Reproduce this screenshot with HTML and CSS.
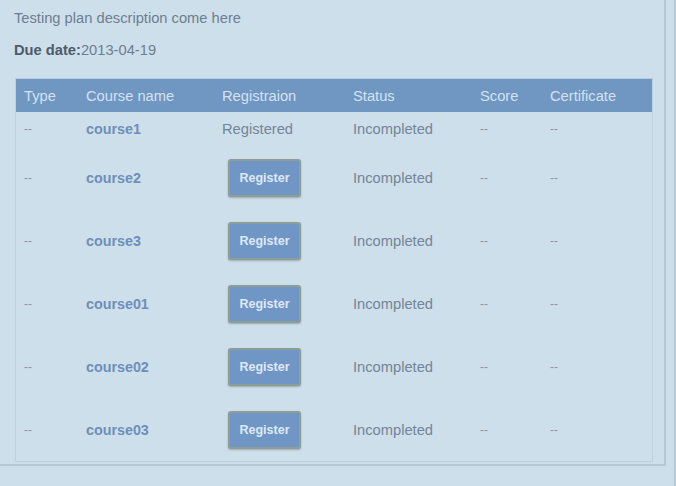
FILE: index.html
```html
<!DOCTYPE html>
<html>
<head>
<meta charset="utf-8">
<link rel="stylesheet" href="styles.css">
</head>
<body>
<div class="page">
  <div class="panel">
    <p class="desc">Testing plan description come here</p>
    <p class="due"><b>Due date:</b>2013-04-19</p>
    <table class="courses">
      <thead>
        <tr>
          <th class="c-type">Type</th>
          <th class="c-name">Course name</th>
          <th class="c-reg">Registraion</th>
          <th class="c-status">Status</th>
          <th class="c-score">Score</th>
          <th class="c-cert">Certificate</th>
        </tr>
      </thead>
      <tbody>
        <tr class="short">
          <td class="dash">--</td>
          <td><a class="course">course1</a></td>
          <td>Registered</td>
          <td>Incompleted</td>
          <td class="dash">--</td>
          <td class="dash">--</td>
        </tr>
        <tr class="tall">
          <td class="dash">--</td>
          <td><a class="course">course2</a></td>
          <td><button class="btn">Register</button></td>
          <td>Incompleted</td>
          <td class="dash">--</td>
          <td class="dash">--</td>
        </tr>
        <tr class="tall">
          <td class="dash">--</td>
          <td><a class="course">course3</a></td>
          <td><button class="btn">Register</button></td>
          <td>Incompleted</td>
          <td class="dash">--</td>
          <td class="dash">--</td>
        </tr>
        <tr class="tall">
          <td class="dash">--</td>
          <td><a class="course">course01</a></td>
          <td><button class="btn">Register</button></td>
          <td>Incompleted</td>
          <td class="dash">--</td>
          <td class="dash">--</td>
        </tr>
        <tr class="tall">
          <td class="dash">--</td>
          <td><a class="course">course02</a></td>
          <td><button class="btn">Register</button></td>
          <td>Incompleted</td>
          <td class="dash">--</td>
          <td class="dash">--</td>
        </tr>
        <tr class="tall">
          <td class="dash">--</td>
          <td><a class="course">course03</a></td>
          <td><button class="btn">Register</button></td>
          <td>Incompleted</td>
          <td class="dash">--</td>
          <td class="dash">--</td>
        </tr>
      </tbody>
    </table>
  </div>
  <div class="strip"></div>
</div>
</body>
</html>
```
FILE: styles.css
```css
html, body {
  margin: 0;
  padding: 0;
  background: #cddfeb;
  height: 100%;
}
body {
  font-family: "Liberation Sans", Arial, sans-serif;
  font-size: 14.7px;
  color: #738394;
}
.page {
  display: flex;
  align-items: flex-start;
  width: 676px;
  height: 486px;
}
.panel {
  flex: none;
  width: 639px;
  padding: 8px 11px 2px 14px;
  border-right: 2px solid #b4c7d5;
  border-bottom: 2px solid #b4c7d5;
  background: #cddfeb;
}
.strip {
  flex: 1;
  align-self: stretch;
  border-right: 2px solid #b9cad7;
}
.desc {
  margin: 0;
  line-height: 20px;
  color: #6e7e8f;
}
.due {
  margin: 12px 0 0;
  line-height: 20px;
  color: #6e7e8f;
}
.due b {
  color: #4d5b69;
}
.courses {
  margin: 18px 0 0 1px;
  width: 638px;
  border-collapse: collapse;
  border: 1px solid #bed1df;
  table-layout: fixed;
}
.courses th {
  background: #7096c2;
  color: #d3e2f1;
  font-weight: normal;
  text-align: left;
  height: 33px;
  padding: 0 0 0 8px;
  border-top: 1px solid #b7cbe0;
}
.c-type { width: 54px; }
.c-name { width: 128px; }
.c-reg { width: 123px; }
.c-status { width: 119px; }
.c-score { width: 62px; }
.c-cert { width: auto; }
.courses td {
  padding: 0 0 0 8px;
  color: #748597;
  vertical-align: middle;
}
.courses tr.short td { height: 34px; }
.courses tr.tall td { height: 63px; }
.courses td.dash {
  color: #8797a8;
  font-size: 12px;
}
.course {
  color: #6d8fb8;
  font-weight: bold;
  font-size: 14.3px;
  cursor: pointer;
}
.btn {
  margin-left: 6px;
  width: 73px;
  height: 38px;
  background: #7096c6;
  border: 2px solid #8f9d97;
  border-radius: 3px;
  box-shadow: 0 1px 2px rgba(60, 70, 60, 0.35);
  color: #dde9f6;
  font-family: "Liberation Sans", Arial, sans-serif;
  font-weight: bold;
  font-size: 12.5px;
  padding: 0;
}
```
